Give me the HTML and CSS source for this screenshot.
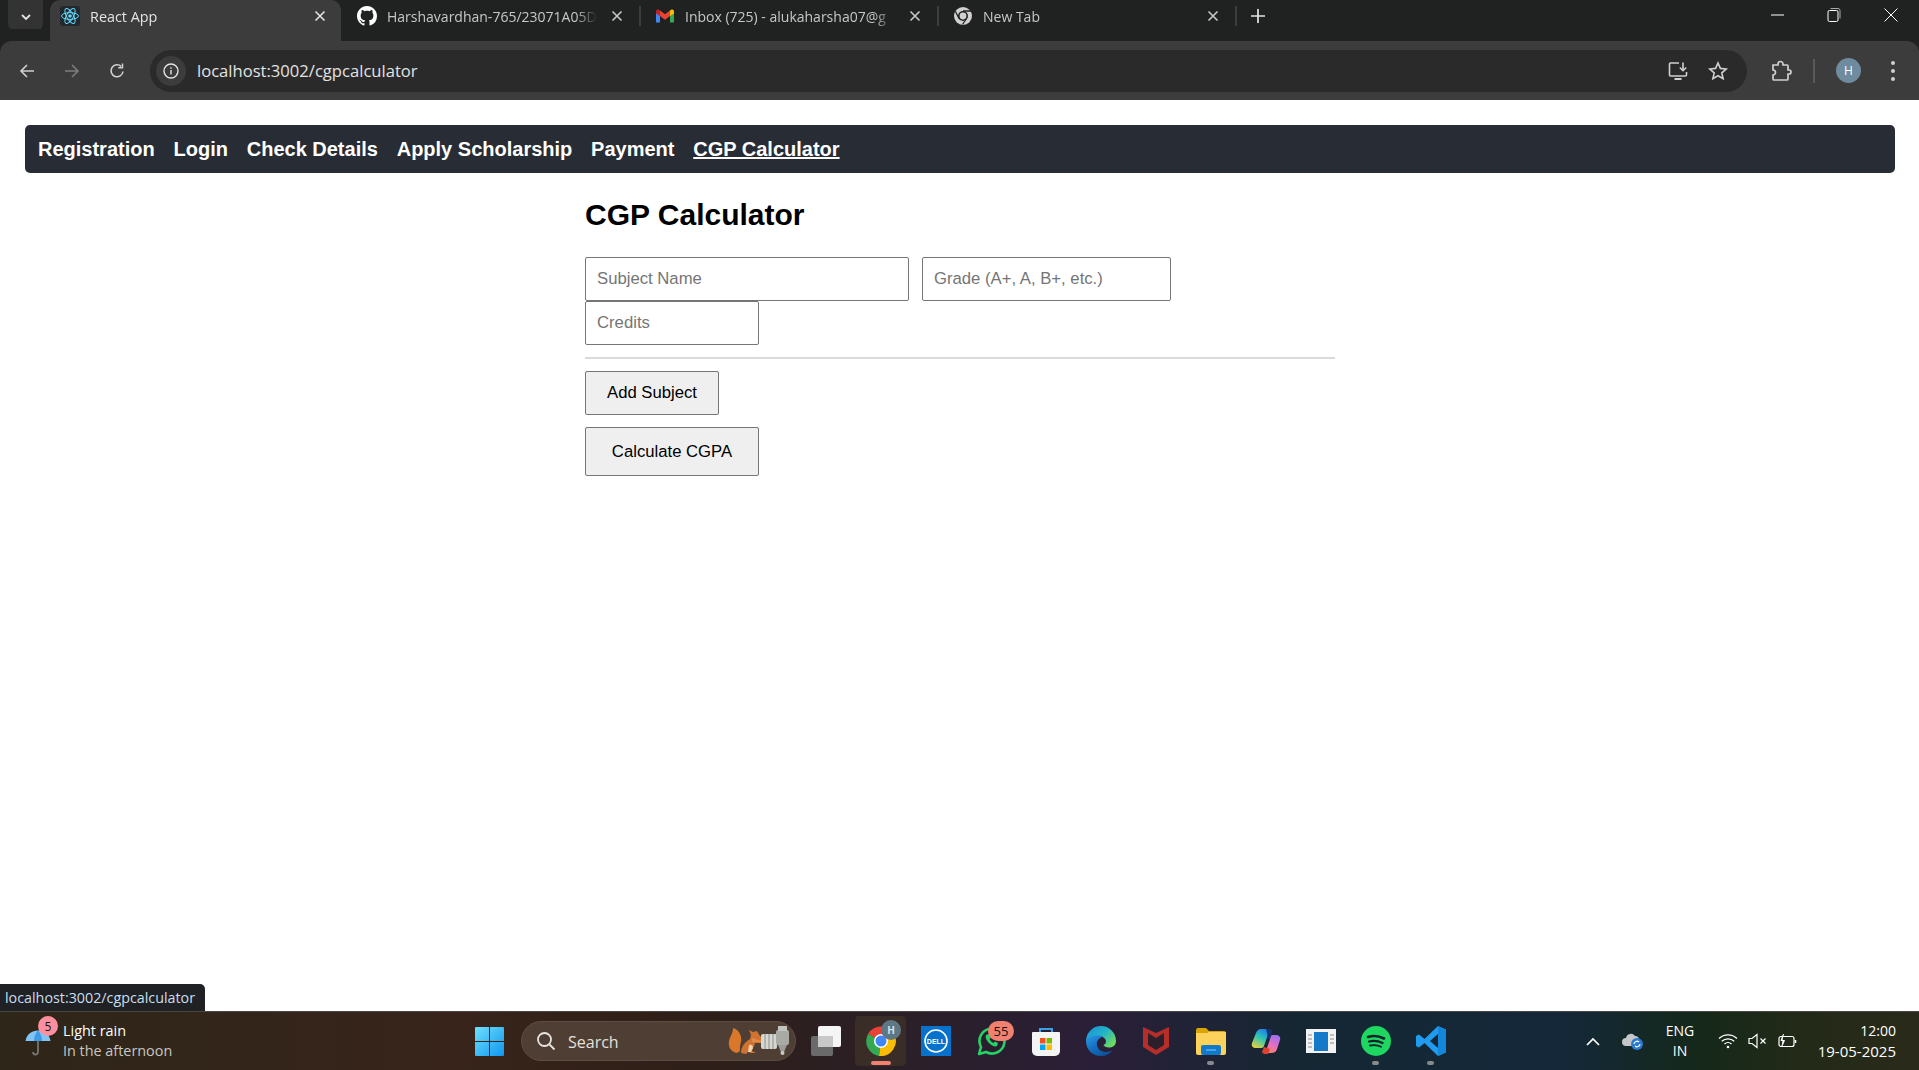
FILE: index.html
```html
<!DOCTYPE html>
<html lang="en">
<head>
  <meta charset="UTF-8">
  <meta name="viewport" content="width=device-width, initial-scale=1.0">
  <title>React App</title>
  <link rel="stylesheet" href="styles.css">
</head>
<body>
  <!-- browser tabs -->
  <div class="tabstrip">
    <div class="tab-search">
      <svg width="12" height="12" viewBox="0 0 12 12"><path d="M2 4l4 4 4-4" fill="none" stroke="#e3e3e3" stroke-width="1.8"/></svg>
    </div>
    <div class="tab active">
      <span class="favicon react">
        <svg width="20" height="20" viewBox="0 0 20 20" fill="none" stroke="#61dafb" stroke-width="1"><circle cx="10" cy="10" r="1.8" fill="#61dafb" stroke="none"/><ellipse cx="10" cy="10" rx="8.5" ry="3.4"/><ellipse cx="10" cy="10" rx="8.5" ry="3.4" transform="rotate(60 10 10)"/><ellipse cx="10" cy="10" rx="8.5" ry="3.4" transform="rotate(120 10 10)"/></svg>
      </span>
      <span class="tab-title">React App</span>
      <svg class="tab-close" width="12" height="12" viewBox="0 0 12 12"><path d="M1.5 1.5l9 9M10.5 1.5l-9 9" stroke="#e3e3e3" stroke-width="1.6"/></svg>
    </div>
    <div class="tab">
      <span class="favicon">
        <svg width="20" height="20" viewBox="0 0 16 16"><path fill="#fff" d="M8 0C3.58 0 0 3.58 0 8c0 3.54 2.29 6.53 5.47 7.59.4.07.55-.17.55-.38 0-.19-.01-.82-.01-1.49-2.01.37-2.53-.49-2.69-.94-.09-.23-.48-.94-.82-1.13-.28-.15-.68-.52-.01-.53.63-.01 1.08.58 1.23.82.72 1.21 1.87.87 2.33.66.07-.52.28-.87.51-1.07-1.78-.2-3.64-.89-3.64-3.95 0-.87.31-1.59.82-2.15-.08-.2-.36-1.02.08-2.12 0 0 .67-.21 2.2.82.64-.18 1.32-.27 2-.27.68 0 1.36.09 2 .27 1.53-1.04 2.2-.82 2.2-.82.44 1.1.16 1.92.08 2.12.51.56.82 1.27.82 2.15 0 3.07-1.87 3.75-3.65 3.95.29.25.54.73.54 1.48 0 1.07-.01 1.93-.01 2.2 0 .21.15.46.55.38A8.013 8.013 0 0016 8c0-4.42-3.58-8-8-8z"/></svg>
      </span>
      <span class="tab-title">Harshavardhan-765/23071A05D</span>
      <svg class="tab-close" width="12" height="12" viewBox="0 0 12 12"><path d="M1.5 1.5l9 9M10.5 1.5l-9 9" stroke="#c7c7c7" stroke-width="1.6"/></svg>
    </div>
    <div class="tab">
      <span class="favicon">
        <svg width="20" height="20" viewBox="0 0 20 20"><path fill="#4285f4" d="M1 5.5V16.5h4V9z"/><path fill="#34a853" d="M15 9v7.5h4V5.5z"/><path fill="#ea4335" d="M5 4.5V10l5 3.7 5-3.7V4.5L10 8.2z"/><path fill="#c5221f" d="M1 5.5V7.5L5 10V4.5L3.6 3.6C2.4 3 1 3.8 1 5.5z"/><path fill="#fbbc04" d="M15 4.5V10l4-2.5v-2c0-1.7-1.4-2.5-2.6-1.9z"/></svg>
      </span>
      <span class="tab-title">Inbox (725) - alukaharsha07@g</span>
      <svg class="tab-close" width="12" height="12" viewBox="0 0 12 12"><path d="M1.5 1.5l9 9M10.5 1.5l-9 9" stroke="#c7c7c7" stroke-width="1.6"/></svg>
    </div>
    <div class="tab">
      <span class="favicon">
        <svg width="20" height="20" viewBox="0 0 20 20"><circle cx="10" cy="10" r="9" fill="#d0d0d0"/><circle cx="10" cy="10" r="5" fill="#202221"/><circle cx="10" cy="10" r="3.4" fill="#d0d0d0"/><path d="M10 5h8M6 12.5L2.5 5.5M13.5 12.5L9.5 18.5" stroke="#202221" stroke-width="1.3"/></svg>
      </span>
      <span class="tab-title">New Tab</span>
      <svg class="tab-close" width="12" height="12" viewBox="0 0 12 12"><path d="M1.5 1.5l9 9M10.5 1.5l-9 9" stroke="#c7c7c7" stroke-width="1.6"/></svg>
    </div>
    <svg class="new-tab" width="14" height="14" viewBox="0 0 14 14"><path d="M7 0v14M0 7h14" stroke="#e3e3e3" stroke-width="1.7"/></svg>
    <div class="win-controls">
      <span class="win-btn"><svg width="14" height="14" viewBox="0 0 14 14"><path d="M0 7h13" stroke="#fff"/></svg></span>
      <span class="win-btn"><svg width="14" height="16" viewBox="0 0 14 16" fill="none" stroke="#fff"><rect x="1" y="3.5" width="10" height="11" rx="1.5"/><path d="M3.5 1.5h7.5a2 2 0 0 1 2 2v8" stroke="#aaa"/></svg></span>
      <span class="win-btn"><svg width="14" height="14" viewBox="0 0 14 14"><path d="M0.5 0.5l13 13M13.5 0.5l-13 13" stroke="#fff"/></svg></span>
    </div>
  </div>

  <!-- browser toolbar -->
  <div class="toolbar">
    <span class="tool-btn"><svg width="16" height="16" viewBox="0 0 16 16" fill="none" stroke="#d0d0d0" stroke-width="1.6"><path d="M15 8H2M8 2L2 8l6 6"/></svg></span>
    <span class="tool-btn"><svg width="16" height="16" viewBox="0 0 16 16" fill="none" stroke="#7c7c7c" stroke-width="1.6"><path d="M1 8h13M8 2l6 6-6 6"/></svg></span>
    <span class="tool-btn"><svg width="16" height="16" viewBox="0 0 16 16" fill="none" stroke="#d0d0d0" stroke-width="1.6"><path d="M14 8.5A6 6 0 1 1 12.2 3.4"/><path d="M13.5 0.5v4.2H9.3" stroke-width="1.5"/></svg></span>
    <div class="address-bar">
      <span class="site-info"><svg width="16" height="16" viewBox="0 0 16 16" fill="none" stroke="#e3e3e3" stroke-width="1.4"><circle cx="8" cy="8" r="7"/><path d="M8 7v4.5M8 4.2v1.6"/></svg></span>
      <span class="url">localhost:3002/cgpcalculator</span>
      <svg class="addr-install" width="22" height="22" viewBox="0 0 22 22" fill="none" stroke="#d0d0d0" stroke-width="1.6"><path d="M12 3H3.5a1 1 0 0 0-1 1v11a1 1 0 0 0 1 1h15a1 1 0 0 0 1-1v-3"/><path d="M16 2.5v8M12.8 7.5l3.2 3.2 3.2-3.2"/><path d="M7.5 19h7" stroke-width="2"/></svg>
      <svg class="addr-star" width="22" height="22" viewBox="0 0 22 22" fill="none" stroke="#d0d0d0" stroke-width="1.6"><path d="M11 3l2.4 5.4 5.8.6-4.4 3.9 1.3 5.8L11 15.7l-5.1 3 1.3-5.8L2.8 9l5.800-.6z"/></svg>
    </div>
    <span class="ext-btn"><svg width="22" height="22" viewBox="0 0 22 22" fill="none" stroke="#d0d0d0" stroke-width="1.7"><path d="M3 5h5V4a2.5 2.5 0 0 1 5 0v1h4a1 1 0 0 1 1 1v4h1a2 2 0 0 1 0 4h-1v5a1 1 0 0 1-1 1H4a1 1 0 0 1-1-1v-4a2.5 2.5 0 0 0 0-5z"/></svg></span>
    <span class="tool-divider"></span>
    <span class="avatar">H</span>
    <span class="menu-dots"><i></i><i></i><i></i></span>
  </div>

  <!-- the page itself -->
  <div class="page">
    <nav class="navbar">
      <a href="#">Registration</a>
      <a href="#">Login</a>
      <a href="#">Check Details</a>
      <a href="#">Apply Scholarship</a>
      <a href="#">Payment</a>
      <a href="#" class="current">CGP Calculator</a>
    </nav>
    <div class="calculator">
      <h2>CGP Calculator</h2>
      <div class="subject-row">
        <input class="input-name" type="text" placeholder="Subject Name">
        <input class="input-grade" type="text" placeholder="Grade (A+, A, B+, etc.)">
        <input class="input-credits" type="text" placeholder="Credits">
      </div>
      <hr>
      <button class="btn-add">Add Subject</button>
      <button class="btn-calc">Calculate CGPA</button>
    </div>
    <div class="status-bubble">localhost:3002/cgpcalculator</div>
  </div>

  <!-- windows taskbar -->
  <div class="taskbar">
    <div class="weather">
      <svg class="umbrella" width="26" height="34" viewBox="0 0 26 34"><path d="M13 14v12a2.5 2.5 0 0 1-5 0" fill="none" stroke="#77757a" stroke-width="1.8"/><path d="M0.5 15C1.5 8 7 4.500 13 4.500S24.500 8 25.500 15z" fill="#7fc4f5"/><path d="M9 15c0-5 2-8.500 4-10.500 2 2 4 5.500 4 10.500z" fill="#3f9ae8"/></svg>
      <span class="weather-badge">5</span>
      <div class="weather-text">
        <span class="w-main">Light rain</span>
        <span class="w-sub">In the afternoon</span>
      </div>
    </div>
    <span class="start">
      <svg width="29" height="29" viewBox="0 0 29 29"><defs><linearGradient id="win" x1="0" y1="0" x2="1" y2="1"><stop offset="0" stop-color="#6fe0fb"/><stop offset="1" stop-color="#0f96f0"/></linearGradient></defs><path fill="url(#win)" d="M1 0h13v14H0V1a1 1 0 0 1 1-1zM15 0h13a1 1 0 0 1 1 1v13H15zM0 15h14v14H1a1 1 0 0 1-1-1zM15 15h14v13a1 1 0 0 1-1 1H15z"/></svg>
    </span>
    <div class="search-pill">
      <svg width="20" height="20" viewBox="0 0 20 20" fill="none" stroke="#e8e4e0" stroke-width="1.8"><circle cx="8.500" cy="8.500" r="6.500"/><path d="M13.500 13.500l5 5"/></svg>
      <span class="search-text">Search</span>
      <svg class="squirrel" width="62" height="32" viewBox="0 0 62 32">
        <path d="M9 28C3 27 0 22 1 16 2 11 5 9 5 3c4 1 7 4 8 9 1 5-2 9-1 14z" fill="#d9772b"/>
        <path d="M13 28c0-6 3-10 9-14l1-4-2-5 4 2 4-1 3 5 3 3-1 3-7 1c-1 4-3 6-3 8l4 2h-6l-1-2-3 3z" fill="#cf7430"/>
        <path d="M21 20c2-1 4 0 4 3l-2 4h-3z" fill="#efd2b0"/>
        <path d="M24 13l10 3v2l-10-1z" fill="#e08a45"/>
        <rect x="33" y="9" width="16" height="15" rx="2" fill="#d6d7d2"/>
        <path d="M37 9v15M41 9v15M45 9v15" stroke="#8e908c"/>
        <rect x="48" y="5" width="13" height="15" rx="2" fill="#a9aaa4"/>
        <rect x="50" y="1" width="9" height="5" fill="#c3c4bf"/>
        <path d="M50 20h9l-3 7h-3z" fill="#9b9c97"/>
        <circle cx="54.500" cy="28" r="2" fill="#c9c9c4"/>
      </svg>
    </div>
    <div class="task-icons">
      <span class="task"><svg width="30" height="30" viewBox="0 0 30 30"><rect x="0" y="10" width="22" height="20" rx="2" fill="#6a6a6a"/><rect x="7" y="0" width="23" height="21" rx="2" fill="#f5f5f5"/><rect x="7" y="10" width="15" height="11" fill="#c8c8c8"/></svg></span>
      <span class="task task-on">
        <svg width="30" height="30" viewBox="0 0 30 30"><path d="M15 15L2 8a15 15 0 0 1 26 0z" fill="#ea4335"/><path d="M15 15L2 8a15 15 0 0 0 11 22z" fill="#34a853"/><path d="M15 15L13 30A15 15 0 0 0 28 8z" fill="#fbbc04"/><circle cx="15" cy="15" r="7" fill="#fff"/><circle cx="15" cy="15" r="5.500" fill="#4285f4"/></svg>
        <span class="chrome-badge">H</span>
        <span class="task-line"></span>
      </span>
      <span class="task"><svg width="30" height="30" viewBox="0 0 30 30"><rect width="30" height="30" fill="#0672cb"/><circle cx="15" cy="15" r="11" fill="none" stroke="#fff" stroke-width="1.600"/><text class="dell-text" x="15" y="17.500" text-anchor="middle">DELL</text></svg></span>
      <span class="task">
        <svg width="30" height="32" viewBox="0 0 30 32" fill="none"><path d="M3 29l2-7A12.500 12.500 0 1 1 10 27z" stroke="#25d366" stroke-width="2.600" stroke-linejoin="round"/><path d="M10 10c-1 2 0 5 3 8s6 4 8 3l1-3-3-1.500-1.500 1.500c-2-1-3-2-4-4l1.500-1.500L13 9z" fill="#25d366"/></svg>
        <span class="count-badge">55</span>
      </span>
      <span class="task"><svg width="30" height="30" viewBox="0 0 30 30"><path d="M9 8V3h12v5" fill="none" stroke="#3aa0e8" stroke-width="2"/><path d="M2 6h26a1 1 0 0 1 1 1v18a5 5 0 0 1-5 5H6a5 5 0 0 1-5-5V7a1 1 0 0 1 1-1z" fill="#f4f4f4"/><rect x="9" y="12" width="5.500" height="5.500" fill="#f25022"/><rect x="15.500" y="12" width="5.500" height="5.500" fill="#7fba00"/><rect x="9" y="18.500" width="5.500" height="5.500" fill="#00a4ef"/><rect x="15.500" y="18.500" width="5.500" height="5.500" fill="#ffb900"/></svg></span>
      <span class="task"><svg width="30" height="30" viewBox="0 0 30 30"><defs><linearGradient id="edgeTop" x1="0" y1="0" x2="1" y2="0.7"><stop offset="0" stop-color="#1b8fdc"/><stop offset="0.55" stop-color="#22b3c8"/><stop offset="1" stop-color="#6edb5e"/></linearGradient><linearGradient id="edgeLow" x1="0" y1="0" x2="0.8" y2="1"><stop offset="0" stop-color="#2a9be8"/><stop offset="0.5" stop-color="#1470c0"/><stop offset="1" stop-color="#0c4d94"/></linearGradient></defs><path d="M0 15A15 15 0 0 1 30 15C30 20 26 21.500 23 21.500 20 21.500 18 20.500 17.500 19 20 18 20.500 15.500 19.500 13.500 18 10.500 14 9.500 10 10.500 5 12 1.500 14 0 15z" fill="url(#edgeTop)"/><path d="M0 15C0 24 7 30 15 30 20 30 24 28 26.500 24.500 20 27.500 12.500 26 11 19.500 10 15 13 12 17 10.500 10 8 2 10 0 15z" fill="url(#edgeLow)"/></svg></span>
      <span class="task"><svg width="26" height="30" viewBox="0 0 26 30"><path d="M0 1l13 6 13-6v20l-13 8-13-8z" fill="#b52e2a"/><path d="M5 7l8 5 8-5v12l-8 5-8-5z" fill="#2b1f2c"/></svg></span>
      <span class="task">
        <svg width="30" height="28" viewBox="0 0 30 28"><path d="M0 3a2 2 0 0 1 2-2h8l3 3h15a2 2 0 0 1 2 2v3H0z" fill="#d9a404"/><path d="M0 6h11l2-1h17v21a2 2 0 0 1-2 2H2a2 2 0 0 1-2-2z" fill="#fcd25a"/><rect x="5" y="18" width="20" height="10" rx="2" fill="#1279c8"/><path d="M10 23h10" stroke="#5ab1ea" stroke-width="1.500"/></svg>
        <span class="task-dot"></span>
      </span>
      <span class="task"><svg width="30" height="26" viewBox="0 0 30 26"><defs><linearGradient id="copA" x1="0.700" y1="0" x2="0.200" y2="1"><stop offset="0" stop-color="#1f7fe8"/><stop offset="0.45" stop-color="#2fc6b4"/><stop offset="1" stop-color="#e8d23c"/></linearGradient><linearGradient id="copB" x1="0.700" y1="0" x2="0.300" y2="1"><stop offset="0" stop-color="#9a6ff0"/><stop offset="0.55" stop-color="#e86fc0"/><stop offset="1" stop-color="#f2855b"/></linearGradient></defs><path d="M24 7h1c3 0 5 2 4 5l-3 9c-1 3-3 4-6 4h-6c-2 0-3-1-3-1 2 0 4-1 5-4l4-12c.5-1.500 2-1 4-1z" fill="url(#copB)"/><path d="M13 19l-2 5 2 2h4l2-5z" fill="#e0402f"/><path d="M10 1h5c2 0 3 1 3 2.500L13 18c-.5 1.500-1.500 2-3 2H5c-3 0-5-2-4-5L5 5c1-2.500 3-4 5-4z" fill="url(#copA)"/><path d="M15 1h4c2 0 2 2 2 3l-3 9z" fill="#16306e"/></svg></span>
      <span class="task"><svg width="30" height="24" viewBox="0 0 30 24"><rect width="30" height="24" fill="#f2f2f2"/><rect x="8" y="3" width="14" height="19" fill="#1579c9"/><path d="M2 6h4M2 10h4M2 14h4M2 18h4M24 6h4M24 10h4M24 14h4" stroke="#8a8a8a"/></svg></span>
      <span class="task">
        <svg width="30" height="30" viewBox="0 0 30 30" fill="none" stroke="#10222c" stroke-linecap="round"><circle cx="15" cy="15" r="15" fill="#1ed760" stroke="none"/><path d="M7 11c5-1.500 11-1 16 1.500" stroke-width="2.600"/><path d="M8 15.500c4-1 9-.8 13.500 1.500" stroke-width="2.200"/><path d="M9 19.500c4-.8 8-.5 11 1.200" stroke-width="1.800"/></svg>
        <span class="task-dot"></span>
      </span>
      <span class="task">
        <svg width="30" height="30" viewBox="0 0 30 30"><path d="M22 0l8 3.500v23L22 30 8.500 17 3 21.500 0 20v-10l3-1.500L8.500 13zM22 8l-8 7 8 7z" fill="#1f9cf0"/><path d="M22 0l8 3.500v23L22 30z" fill="#0f7fd0" opacity="0.7"/></svg>
        <span class="task-dot"></span>
      </span>
    </div>
    <div class="tray">
      <span class="tray-chevron"><svg width="14" height="9" viewBox="0 0 14 9" fill="none" stroke="#fff" stroke-width="1.700"><path d="M1 8l6-6 6 6"/></svg></span>
      <span class="tray-cloud"><svg width="22" height="18" viewBox="0 0 22 18"><path d="M4 14a4 4 0 0 1 0-8 5 5 0 0 1 9-2 4 4 0 0 1 4 4H14v6z" fill="#c4c6c8"/><circle cx="15" cy="12" r="6" fill="#2a7ad0"/><path d="M12 12a3 3 0 0 1 5-2M18 12a3 3 0 0 1-5 2" fill="none" stroke="#fff" stroke-width="1.200"/></svg></span>
      <span class="tray-lang">ENG<br>IN</span>
      <span class="tray-icon"><svg width="20" height="16" viewBox="0 0 20 16" fill="none" stroke="#fff" stroke-width="1.300"><path d="M1 5.500a13 13 0 0 1 18 0M3.800 8.300a9 9 0 0 1 12.400 0M6.500 11a5 5 0 0 1 7 0"/><circle cx="10" cy="14" r="1.300" fill="#fff" stroke="none"/></svg></span>
      <span class="tray-icon"><svg width="20" height="16" viewBox="0 0 20 16" fill="none" stroke="#fff" stroke-width="1.200"><path d="M1 5.500h3l5-4v13l-5-4H1z"/><path d="M12.500 5.500l5 5M17.500 5.500l-5 5"/></svg></span>
      <span class="tray-icon"><svg width="20" height="16" viewBox="0 0 20 16" fill="none" stroke="#fff" stroke-width="1.200"><rect x="1" y="3.500" width="15" height="10" rx="2"/><path d="M17.500 7v3" stroke-width="1.600"/><path d="M5.500 1L3 7.500h3.500L3.500 14" fill="#fff" stroke-width="1"/></svg></span>
      <div class="clock"><span>12:00</span><span class="clock-date">19-05-2025</span></div>
    </div>
  </div>
</body>
</html>
```

FILE: styles.css
```css
* {
  box-sizing: border-box;
}

html,
body {
  height: 100%;
}

body {
  margin: 0;
  height: 1070px;
  display: flex;
  flex-direction: column;
  overflow: hidden;
  background-color: #fff;
  font-family: "Liberation Sans", Arial, sans-serif;
}

/* browser tabs */
.tabstrip {
  height: 41px;
  flex-shrink: 0;
  display: flex;
  align-items: center;
  padding-left: 8px;
  background-color: #202221;
  color: #c7c7c7;
  font-family: "Open Sans", sans-serif;
  font-size: 14px;
}

.tab-search {
  width: 35px;
  height: 33px;
  align-self: flex-start;
  margin-right: 7px;
  display: flex;
  align-items: center;
  justify-content: center;
  background-color: #333;
  border-radius: 0 0 10px 10px;
}

.tab {
  position: relative;
  width: 298px;
  height: 41px;
  padding: 0 18px 9px 14px;
  display: flex;
  align-items: center;
}

.tab::after {
  content: "";
  position: absolute;
  right: 0;
  top: 6px;
  width: 2px;
  height: 20px;
  background-color: #3b3d3c;
}

.tab.active {
  width: 291px;
  margin-right: 2px;
  padding: 0 15px 9px 10px;
  background-color: #3c3c3c;
  border-radius: 10px 10px 0 0;
  color: #e3e3e3;
  font-size: 14.4px;
}

.tab.active::after {
  display: none;
}

.favicon {
  width: 20px;
  height: 20px;
  flex-shrink: 0;
  margin-right: 10px;
  display: flex;
}

.favicon.react {
  background-color: #23272e;
  border-radius: 3px;
}

.tab-title {
  flex: 1;
  min-width: 0;
  white-space: nowrap;
  overflow: hidden;
  -webkit-mask-image: linear-gradient(to right, #000 90%, transparent);
  mask-image: linear-gradient(to right, #000 90%, transparent);
}

.tab-close {
  flex-shrink: 0;
  margin-left: 14px;
}

.new-tab {
  margin: 0 0 9px 14px;
}

.win-controls {
  margin-left: auto;
  align-self: flex-start;
  display: flex;
}

.win-btn {
  width: 56.500px;
  height: 30px;
  display: flex;
  align-items: center;
  justify-content: center;
}

/* browser toolbar */
.toolbar {
  height: 59px;
  flex-shrink: 0;
  display: flex;
  align-items: center;
  padding-left: 9px;
  background-color: #3c3c3c;
  border-radius: 12px 12px 0 0;
  box-shadow: 0 -12px 0 0 #202221;
}

.tool-btn {
  width: 36px;
  height: 36px;
  margin-right: 9px;
  display: flex;
  align-items: center;
  justify-content: center;
}

.address-bar {
  width: 1597px;
  height: 42px;
  margin-left: 6px;
  padding-left: 6px;
  display: flex;
  align-items: center;
  background-color: #2a2a2a;
  border-radius: 21px;
}

.site-info {
  width: 30px;
  height: 30px;
  display: flex;
  align-items: center;
  justify-content: center;
  background-color: #3c3c3c;
  border-radius: 50%;
}

.url {
  margin-left: 11px;
  color: #e3e3e3;
  font-family: "Open Sans", sans-serif;
  font-size: 16.6px;
}

.addr-install {
  margin-left: auto;
}

.addr-star {
  margin: 0 18px;
}

.ext-btn {
  width: 22px;
  margin-left: 23px;
  display: flex;
}

.tool-divider {
  width: 2px;
  height: 24px;
  margin-left: 21px;
  background-color: #5a5a5a;
}

.avatar {
  width: 25px;
  height: 25px;
  margin-left: 21px;
  display: flex;
  align-items: center;
  justify-content: center;
  background-color: #6f8b9e;
  border-radius: 50%;
  color: #fff;
  font-family: "Open Sans", sans-serif;
  font-size: 12px;
}

.menu-dots {
  margin-left: 30px;
  display: flex;
  flex-direction: column;
  gap: 4px;
}

.menu-dots i {
  width: 4px;
  height: 4px;
  background-color: #d0d0d0;
  border-radius: 50%;
}

/* the page itself */
.page {
  position: relative;
  flex: 1;
  padding: 25px 24px 0 25px;
}

.navbar {
  height: 48px;
  padding-left: 13px;
  display: flex;
  align-items: center;
  gap: 18.8px;
  background-color: #282c34;
  border-radius: 5px;
}

.navbar a {
  color: #fff;
  font-size: 20px;
  font-weight: bold;
  text-decoration: none;
}

.navbar a.current {
  text-decoration: underline;
}

.calculator {
  width: 750px;
  margin: 0 auto;
}

.calculator h2 {
  margin: 25px 0;
  color: #000;
  font-size: 30px;
}

.subject-row {
  display: flex;
  flex-wrap: wrap;
  column-gap: 13px;
}

.subject-row input {
  height: 44px;
  padding: 0 11px;
  border: 1px solid #767676;
  border-radius: 2px;
  font-family: "Liberation Sans", Arial, sans-serif;
  font-size: 16.7px;
}

.subject-row input::placeholder {
  color: #757575;
}

.input-name {
  width: 324px;
}

.input-grade {
  width: 249px;
}

.input-credits {
  width: 174px;
}

.calculator hr {
  height: 2px;
  margin: 12px 0;
  border: none;
  background-color: #dadada;
}

.calculator button {
  display: block;
  background-color: #efefef;
  border: 1px solid #767676;
  border-radius: 2px;
  color: #000;
  font-family: "Liberation Sans", Arial, sans-serif;
  font-size: 16.7px;
}

.btn-add {
  width: 134px;
  height: 44px;
  margin-bottom: 12px;
}

.btn-calc {
  width: 174px;
  height: 49px;
}

.status-bubble {
  position: absolute;
  left: 0;
  bottom: 0;
  width: 205px;
  height: 27px;
  padding-left: 5px;
  display: flex;
  align-items: center;
  background-color: #202124;
  border-radius: 0 5px 0 0;
  color: #c9dfee;
  font-family: "Open Sans", sans-serif;
  font-size: 14.3px;
  white-space: nowrap;
}

/* windows taskbar */
.taskbar {
  height: 59px;
  flex-shrink: 0;
  display: flex;
  align-items: center;
  border-top: 1px solid #4a4644;
  background: linear-gradient(to right, #2e2618 0, #33251a 230px, #38241a 450px, #2e1f18 700px, #2a1f2c 960px, #2a1f38 1100px, #152733 1300px, #14283a 1560px, #15281a 1700px, #232a18 1800px, #2a2a1a 100%);
  color: #fff;
  font-family: "Open Sans", sans-serif;
  font-size: 14px;
}

.weather {
  position: relative;
  width: 464px;
  padding-left: 25px;
  display: flex;
  align-items: center;
}

.umbrella {
  margin-top: 4px;
}

.weather-badge {
  position: absolute;
  left: 38px;
  top: -5px;
  width: 20px;
  height: 20px;
  display: flex;
  align-items: center;
  justify-content: center;
  background-color: #ff8f9f;
  border-radius: 50%;
  color: #111;
  font-size: 12px;
}

.weather-text {
  margin-left: 12px;
  display: flex;
  flex-direction: column;
  font-size: 14.4px;
  line-height: 20px;
}

.w-sub {
  color: #c8c6c2;
}

.start {
  width: 50px;
  display: flex;
  justify-content: center;
}

.search-pill {
  width: 275px;
  height: 40px;
  margin-left: 7px;
  padding: 0 5px 0 14px;
  display: flex;
  align-items: center;
  background-color: #4f3e33;
  border: 1px solid #5d4c41;
  border-radius: 20px;
}

.search-text {
  margin: 2px 0 0 12px;
  color: #e4e0dc;
  font-size: 16px;
}

.squirrel {
  margin-left: auto;
}

.task-icons {
  margin-left: 2px;
  display: flex;
}

.task {
  position: relative;
  width: 55px;
  height: 50px;
  display: flex;
  align-items: center;
  justify-content: center;
}

.task-on {
  background-color: #3a2d28;
  border-radius: 5px;
  background-clip: content-box;
  padding: 0 2px;
}

.dell-text {
  fill: #fff;
  font-family: "Liberation Sans", Arial, sans-serif;
  font-size: 7px;
  font-weight: bold;
}

.chrome-badge {
  position: absolute;
  left: 28px;
  top: 4px;
  width: 20px;
  height: 20px;
  display: flex;
  align-items: center;
  justify-content: center;
  background-color: #5f7684;
  border-radius: 50%;
  color: #d8e0e6;
  font-size: 10px;
  font-weight: bold;
}

.task-line {
  position: absolute;
  left: 18px;
  bottom: 1px;
  width: 20px;
  height: 4px;
  background-color: #f08070;
  border-radius: 2px;
}

.task-dot {
  position: absolute;
  left: 24px;
  bottom: 1px;
  width: 7px;
  height: 4px;
  background-color: #8a8a8a;
  border-radius: 2px;
}

.count-badge {
  position: absolute;
  left: 25px;
  top: 5px;
  width: 26px;
  height: 20px;
  display: flex;
  align-items: center;
  justify-content: center;
  background-color: #f08070;
  border-radius: 10px;
  color: #111;
  font-size: 13px;
}

.tray {
  margin-left: auto;
  padding-right: 23px;
  display: flex;
  align-items: center;
}

.tray-chevron,
.tray-cloud {
  width: 40px;
  display: flex;
  justify-content: center;
}

.tray-lang {
  width: 54px;
  text-align: center;
  line-height: 20px;
}

.tray-icon {
  width: 30px;
  display: flex;
  justify-content: center;
}

.tray-lang + .tray-icon {
  margin-left: 6px;
}

.clock {
  width: 93px;
  display: flex;
  flex-direction: column;
  align-items: flex-end;
  line-height: 20px;
}

.clock-date {
  font-size: 15px;
}
```
